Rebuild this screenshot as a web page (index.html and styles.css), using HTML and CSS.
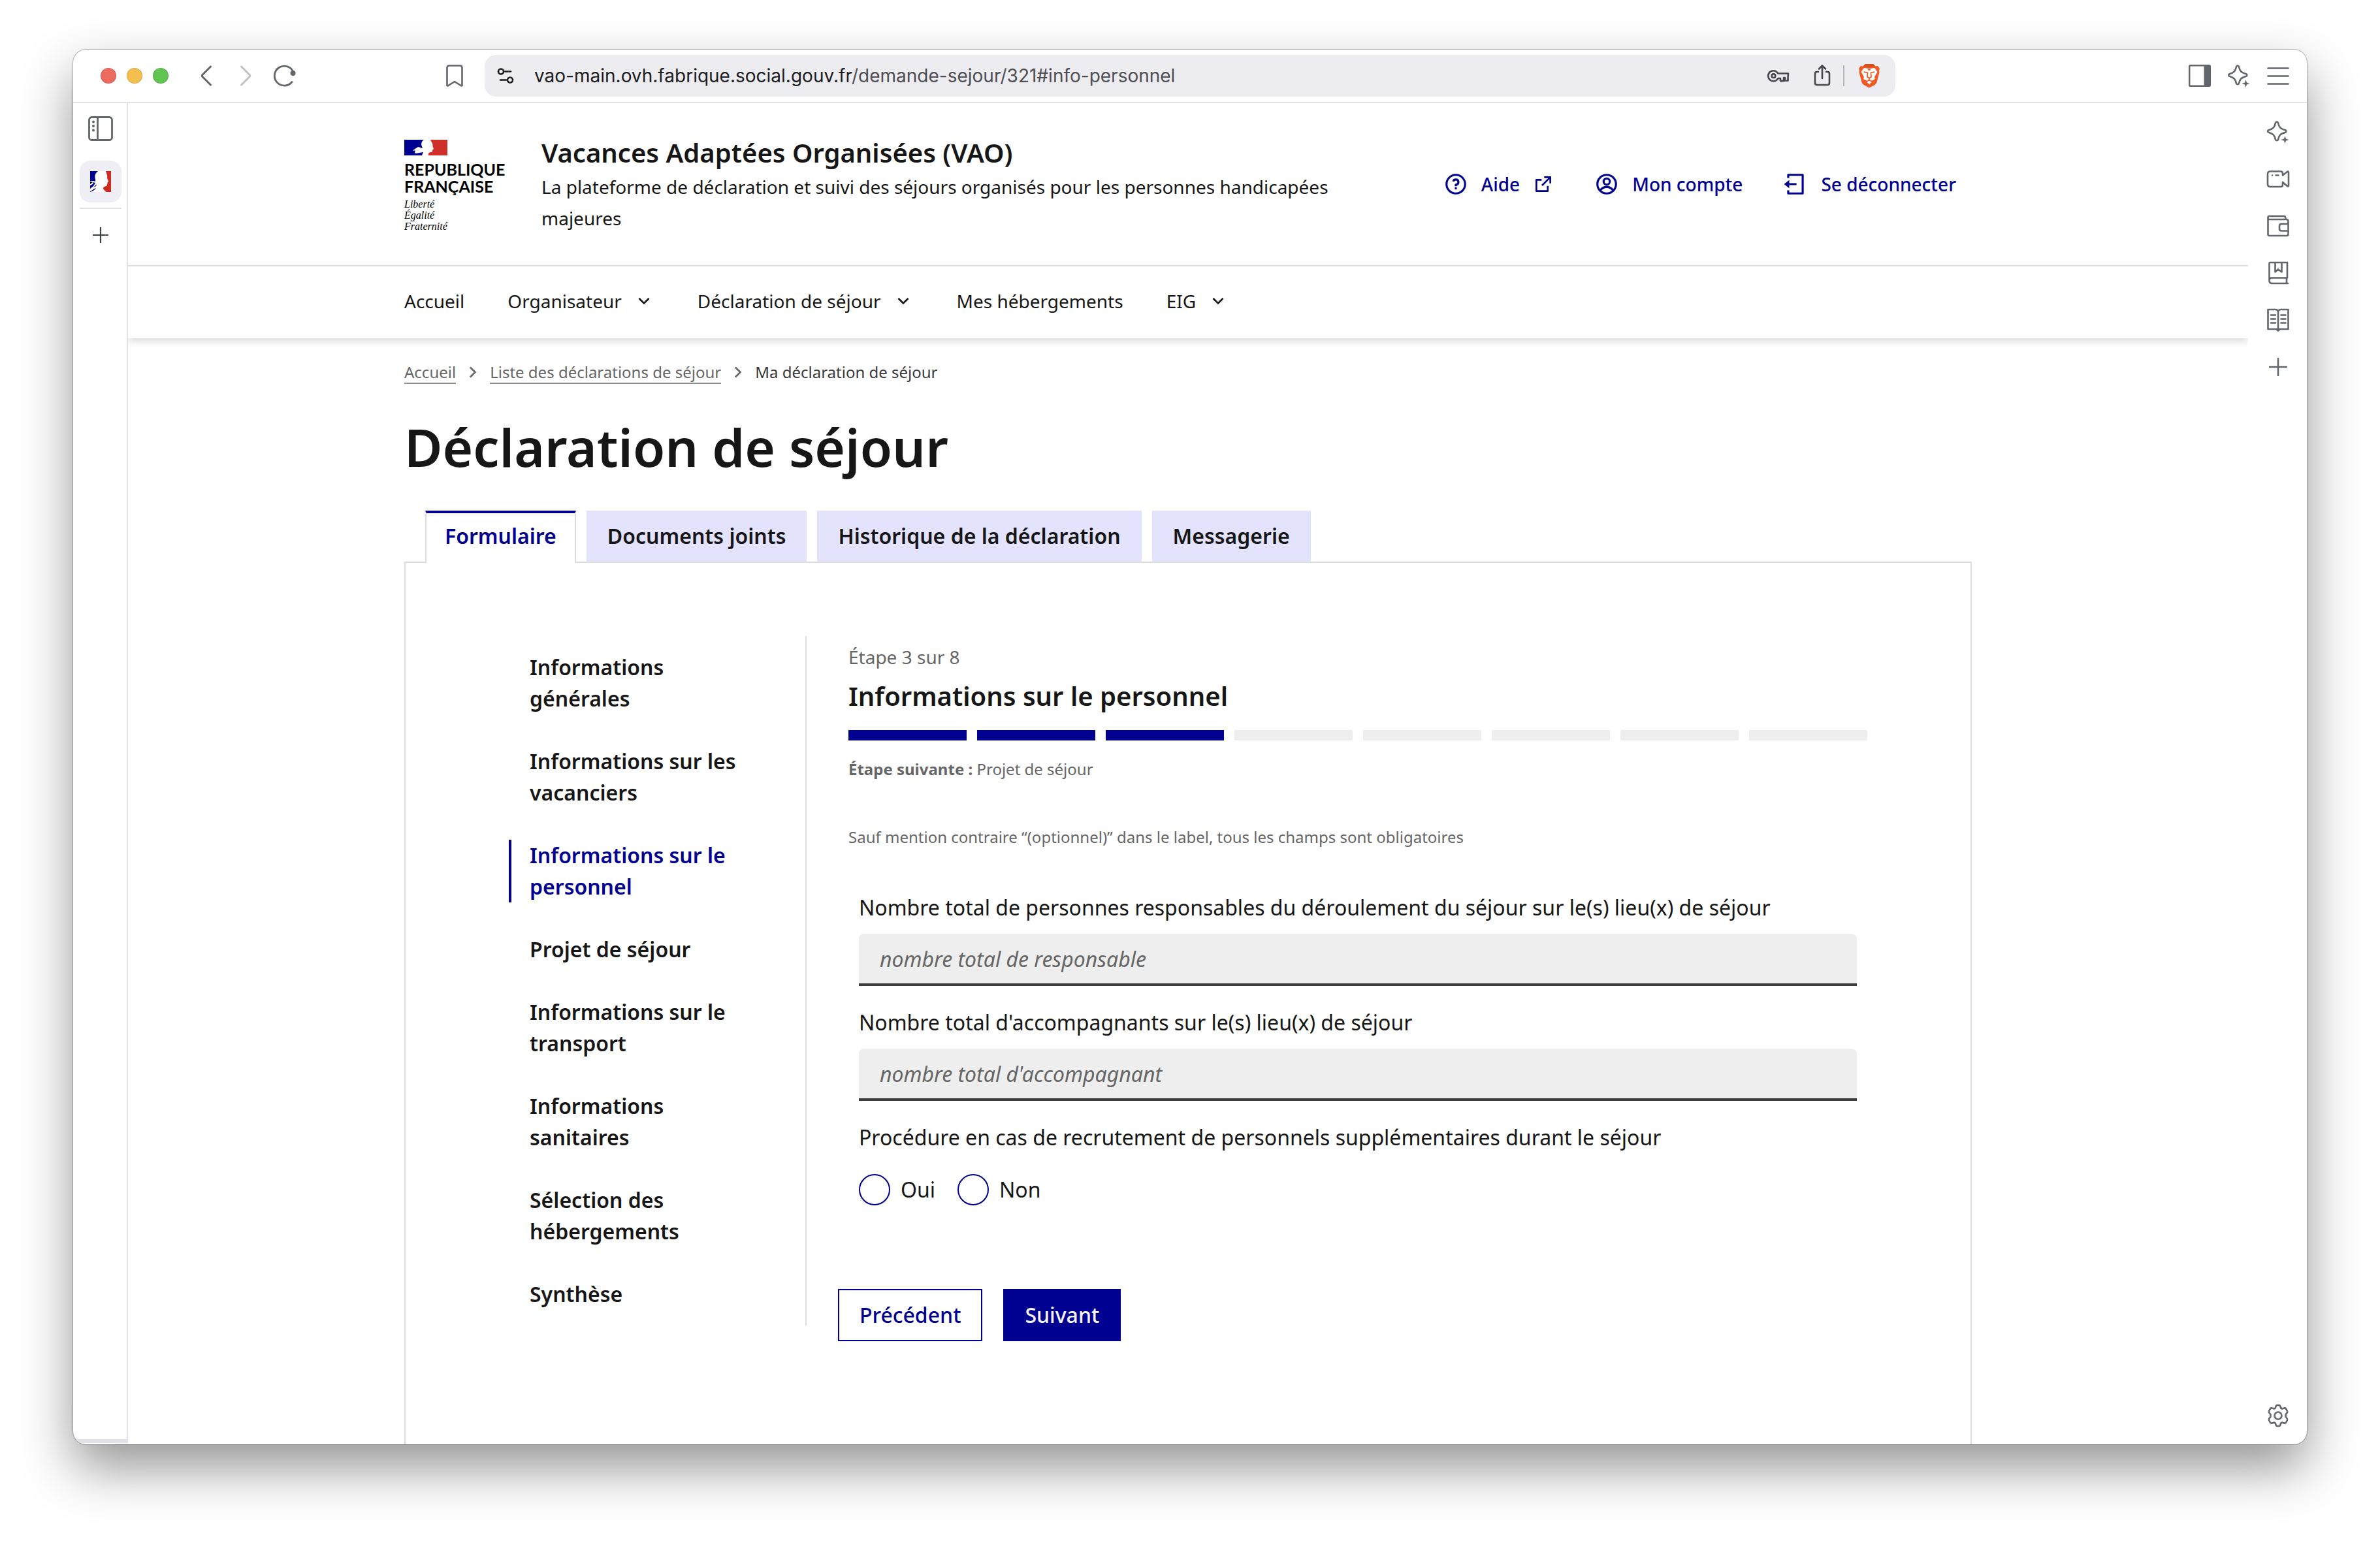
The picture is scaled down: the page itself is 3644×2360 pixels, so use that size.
FILE: index.html
```html
<!DOCTYPE html>
<html lang="fr">
<head>
<meta charset="utf-8">
<title>Déclaration de séjour - Vacances Adaptées Organisées</title>
<meta name="viewport" content="width=device-width, initial-scale=1">
<link rel="stylesheet" href="styles.css">
</head>
<body>
<svg class="defs" aria-hidden="true">
  <symbol id="sparkle" viewBox="0 0 36 36">
    <path d="M16 2.500c1 0 1.700.7 2 1.700 1.300 6.500 3.300 8.800 11 11 1.800.5 1.800 3 0 3.600-7.700 2.200-9.700 4.500-11 11-.4 1.900-3.600 1.900-4 0-1.300-6.500-3.300-8.800-10.500-11-1.800-.6-1.800-3.100 0-3.600C10.700 13 12.700 10.700 14 4.200c.3-1 1-1.700 2-1.700z" fill="none" stroke="currentColor" stroke-width="2.600" stroke-linejoin="round"/>
    <path d="M28.500 24l1.500 4.500 4.500 1.500-4.500 1.500-1.500 4.500-1.500-4.500-4.500-1.500 4.500-1.500z" fill="currentColor"/>
  </symbol>
  <symbol id="plus" viewBox="0 0 28 28">
    <path d="M14 1v26M1 14h26" stroke="currentColor" stroke-width="2.600" stroke-linecap="round"/>
  </symbol>
  <symbol id="chevron-down" viewBox="0 0 24 24">
    <path d="M12 13.200l4.950-4.950 1.410 1.410L12 16 5.640 9.660l1.410-1.410z" fill="currentColor"/>
  </symbol>
  <symbol id="chevron-right" viewBox="0 0 24 24">
    <path d="M13.170 12L8.220 7.050l1.410-1.410L16 12l-6.370 6.360-1.410-1.410z" fill="currentColor"/>
  </symbol>
</svg>

<div class="window">
  <header class="toolbar">
    <div class="toolbar-side">
      <div class="lights">
        <span class="light light-close"></span>
        <span class="light light-min"></span>
        <span class="light light-max"></span>
      </div>
      <button class="icon-btn" type="button" aria-label="Page précédente">
        <svg class="icon" viewBox="0 0 36 36"><path d="M24.500 4L12 16.500q-1.500 1.500 0 3L24.500 32" fill="none" stroke="currentColor" stroke-width="3" stroke-linecap="round"/></svg>
      </button>
      <button class="icon-btn icon-btn-off" type="button" aria-label="Page suivante">
        <svg class="icon" viewBox="0 0 36 36"><path d="M11.500 4L24 16.500q1.500 1.500 0 3L11.500 32" fill="none" stroke="currentColor" stroke-width="3" stroke-linecap="round"/></svg>
      </button>
      <button class="icon-btn" type="button" aria-label="Actualiser">
        <svg class="icon" viewBox="0 0 36 36"><path d="M29 27.500A15 15 0 1 1 31 12" fill="none" stroke="currentColor" stroke-width="2.800" stroke-linecap="round"/><circle cx="30.500" cy="14" r="4" fill="currentColor"/></svg>
      </button>
      <button class="icon-btn bookmark" type="button" aria-label="Ajouter aux favoris">
        <svg class="icon" viewBox="0 0 36 36"><path d="M6.500 33V6q0-3.500 3.500-3.500h16q3.500 0 3.500 3.500v27l-1 .5L18 27 7.500 33.500z" fill="none" stroke="currentColor" stroke-width="2.600" stroke-linejoin="round"/></svg>
      </button>
    </div>
    <div class="address">
      <svg class="icon-tune" viewBox="0 0 28 28" aria-hidden="true"><g fill="none" stroke="currentColor" stroke-width="2.600" stroke-linecap="round"><circle cx="7" cy="7.500" r="4"/><path d="M13 7.500h9"/><circle cx="21" cy="20.500" r="4"/><path d="M6 20.500h9"/></g></svg>
      <div class="url" role="textbox" aria-label="Adresse" contenteditable="true" spellcheck="false">vao-main.ovh.fabrique.social.gouv.fr<span class="url-path">/demande-sejour/321#info-personnel</span></div>
      <button class="icon-btn key" type="button" aria-label="Mots de passe">
        <svg class="icon" viewBox="0 0 36 36"><g fill="none" stroke="currentColor" stroke-width="2.600" stroke-linejoin="round"><path d="M18.300 14.500A8 8 0 1 0 18.300 22H22v4h5v-5h2v4.500h4.500V21l.5-6.500z"/><circle cx="11.500" cy="18.200" r="2.800"/></g></svg>
      </button>
      <button class="icon-btn" type="button" aria-label="Partager">
        <svg class="icon" viewBox="0 0 36 36"><g fill="none" stroke="currentColor" stroke-width="2.600" stroke-linecap="round" stroke-linejoin="round"><path d="M18 22V3M13 7.500L18 2.500l5 5M12 12H10q-3 0-3 3v14q0 3 3 3h16q3 0 3-3V15q0-3-3-3h-2"/></g></svg>
      </button>
      <span class="address-rule"></span>
      <button class="icon-btn" type="button" aria-label="Brave Shields">
        <svg class="icon" viewBox="0 0 36 36"><path d="M12 0h12l3.500 3.500 3.500-.5 3 4-1 3 .5 3-4 15q-1 2.500-3 4L18 36.500l-8.500-4.500q-2-1.500-3-4l-4-15L3 10 2 7l3-4 3.500.5z" fill="#f15a24"/><path d="M12 0h12l3.500 3.500L18 5.500 8.500 3.500z" fill="#d9501f"/><path d="M10 6l8 1.200L26 6l4.500 6-4.500 8 1 3-6 3 1 1.500-4 3.500-4-3.500 1-1.500-6-3 1-3-4.500-8z" fill="#fff"/><path d="M9.500 12l6 1.500-.5 6 3 2.500 3-2.500-.5-6 6-1.500M18 22v2.500l-5 3M18 24.500l5 3M16 8.500l2 .5 2-.5" fill="none" stroke="#f15a24" stroke-width="1.800"/></svg>
      </button>
    </div>
    <div class="toolbar-side toolbar-end">
      <button class="icon-btn" type="button" aria-label="Panneau latéral">
        <svg class="icon" viewBox="0 0 36 36"><rect x="2.200" y="2.200" width="31.600" height="31.600" rx="1.500" fill="none" stroke="currentColor" stroke-width="2.400"/><path d="M24.500 2h9v32h-9z" fill="currentColor"/></svg>
      </button>
      <button class="icon-btn" type="button" aria-label="Leo AI"><svg class="icon"><use href="#sparkle"/></svg></button>
      <button class="icon-btn" type="button" aria-label="Menu">
        <svg class="icon" viewBox="0 0 36 36"><path d="M2.500 6.500h31M2.500 18.500h31M2.500 30.500h31" stroke="currentColor" stroke-width="2.600" stroke-linecap="round"/></svg>
      </button>
    </div>
  </header>

  <div class="workspace">
    <aside class="tabs-rail">
      <button class="icon-btn" type="button" aria-label="Développer les onglets">
        <svg class="icon-lg" viewBox="0 0 38 38"><rect x="1.500" y="1.500" width="35" height="35" rx="4" fill="none" stroke="currentColor" stroke-width="2.800"/><path d="M14.500 2v34" stroke="currentColor" stroke-width="2.800"/><g fill="currentColor"><circle cx="8" cy="8.500" r="2"/><circle cx="8" cy="15" r="2"/><circle cx="8" cy="21.500" r="2"/></g></svg>
      </button>
      <button class="rail-tab" type="button" aria-label="Déclaration de séjour">
        <svg class="icon-fav" viewBox="0 0 32 32"><path fill="#fff" d="M0 0h32v32H0z"/><path d="M0 0h12C8 3 7 7 7.500 10c.2 2 1 4 .5 6l-3-1-5 1z" fill="#000091"/><path d="M0 17h4l-4 3zM0 22l4-2 1-3 3 1-3 5-5 4zM0 31c3-1 5-4 9-5-2 3-5 5-9 6zM10 20l-1 3-4 2z" fill="#000091"/><path d="M24 0h8v32h-8c0-2-4-3-4-6 0-3 6-2 6-5 0-2 1-2 .5-3.500.3-1 2-1 1.500-2L26 11c1-4-1-7-2-11z" fill="#ce2b23"/></svg>
      </button>
      <span class="rail-rule"></span>
      <button class="icon-btn rail-add" type="button" aria-label="Nouvel onglet"><svg class="icon-sm"><use href="#plus"/></svg></button>
    </aside>

    <div class="page">
      <header class="site-header">
        <div class="container header-body">
          <a class="logo" href="#" aria-label="République française">
            <svg class="flag" viewBox="0 0 66 24"><path d="M0 0h66v24H0z" fill="#fff"/><path d="M0 0h30c-3 2-4.500 5-3.500 9l1.500 4-3-1-4-1-6 4-2 2 4-1-1 4 2 1 5-1 6-1-2 5H0z" fill="#000091"/><path d="M14 16l5-3 3 1-4 2 4 1-5 3 3-3z" fill="#fff"/><path d="M40 0h26v24H37c-1-3 1-5 5-5 2-1 0-3 2-4 2-1 0-3-.5-5C44 5 41 3 40 0z" fill="#d0302a"/></svg>
            <span class="logo-name">REPUBLIQUE<br>FRANÇAISE</span>
            <span class="logo-motto">Liberté<br>Égalité<br>Fraternité</span>
          </a>
          <div class="service">
            <p class="service-title">Vacances Adaptées Organisées (VAO)</p>
            <p class="service-tagline">La plateforme de déclaration et suivi des séjours organisés pour les personnes handicapées majeures</p>
          </div>
          <div class="quick-links">
            <a class="quick-link" href="#">
              <svg class="icon-lg" viewBox="0 0 24 24" fill="currentColor"><path d="M12 22C6.477 22 2 17.523 2 12S6.477 2 12 2s10 4.477 10 10-4.477 10-10 10zm0-2a8 8 0 1 0 0-16 8 8 0 0 0 0 16zm-1-5h2v2h-2v-2zm2-1.645V14h-2v-1.500a1 1 0 0 1 1-1 1.500 1.500 0 1 0-1.471-1.794l-1.962-.393A3.501 3.501 0 1 1 13 13.355z"/></svg>
              Aide
              <svg class="icon-md" viewBox="0 0 24 24" fill="currentColor"><path d="M10 6v2H5v11h11v-5h2v6a1 1 0 0 1-1 1H4a1 1 0 0 1-1-1V7a1 1 0 0 1 1-1h6zm11-3v8h-2V6.413l-7.793 7.794-1.414-1.414L17.585 5H13V3h8z"/></svg>
            </a>
            <a class="quick-link" href="#">
              <svg class="icon-lg" viewBox="0 0 24 24" fill="none" stroke="currentColor" stroke-width="2"><circle cx="12" cy="12" r="9"/><circle cx="12" cy="9.500" r="3"/><path d="M5.800 18a7.500 7.500 0 0 1 12.400 0"/></svg>
              Mon compte
            </a>
            <a class="quick-link" href="#">
              <svg class="icon-lg" viewBox="0 0 24 24" fill="currentColor"><path d="M4 18h2v2h12V4H6v2H4V3a1 1 0 0 1 1-1h14a1 1 0 0 1 1 1v18a1 1 0 0 1-1 1H5a1 1 0 0 1-1-1v-3zm2-7h7v2H6v3l-5-4 5-4v3z"/></svg>
              Se déconnecter
            </a>
          </div>
        </div>
        <div class="nav-bar">
          <nav class="container nav" aria-label="Menu principal">
            <a class="nav-item" href="#">Accueil</a>
            <button class="nav-item" type="button">Organisateur <svg class="icon-md"><use href="#chevron-down"/></svg></button>
            <button class="nav-item" type="button">Déclaration de séjour <svg class="icon-md"><use href="#chevron-down"/></svg></button>
            <a class="nav-item" href="#">Mes hébergements</a>
            <button class="nav-item" type="button">EIG <svg class="icon-md"><use href="#chevron-down"/></svg></button>
          </nav>
        </div>
      </header>

      <main class="container main">
        <nav class="breadcrumb" aria-label="vous êtes ici :">
          <a class="crumb" href="#">Accueil</a>
          <svg class="icon-md"><use href="#chevron-right"/></svg>
          <a class="crumb" href="#">Liste des déclarations de séjour</a>
          <svg class="icon-md"><use href="#chevron-right"/></svg>
          <span class="crumb-current" aria-current="page">Ma déclaration de séjour</span>
        </nav>
        <h1 class="title">Déclaration de séjour</h1>

        <div class="tablist" role="tablist">
          <button class="tab tab-selected" type="button" role="tab" aria-selected="true">Formulaire</button>
          <button class="tab" type="button" role="tab">Documents joints</button>
          <button class="tab" type="button" role="tab">Historique de la déclaration</button>
          <button class="tab" type="button" role="tab">Messagerie</button>
        </div>

        <section class="panel" role="tabpanel">
          <nav class="steps" aria-label="Étapes">
            <a class="step" href="#">Informations générales</a>
            <a class="step" href="#">Informations sur les vacanciers</a>
            <a class="step step-active" href="#info-personnel" aria-current="step">Informations sur le personnel</a>
            <a class="step" href="#">Projet de séjour</a>
            <a class="step" href="#">Informations sur le transport</a>
            <a class="step" href="#">Informations sanitaires</a>
            <a class="step" href="#">Sélection des hébergements</a>
            <a class="step" href="#">Synthèse</a>
          </nav>

          <form class="form" id="info-personnel">
            <p class="stepper-state">Étape 3 sur 8</p>
            <h2 class="stepper-title">Informations sur le personnel</h2>
            <div class="stepper-bars">
              <span class="bar bar-done"></span><span class="bar bar-done"></span><span class="bar bar-done"></span><span class="bar"></span><span class="bar"></span><span class="bar"></span><span class="bar"></span><span class="bar"></span>
            </div>
            <p class="note stepper-next"><b>Étape suivante :</b> Projet de séjour</p>
            <p class="note required-note">Sauf mention contraire “(optionnel)” dans le label, tous les champs sont obligatoires</p>

            <div class="fields">
              <div class="field">
                <label for="responsables">Nombre total de personnes responsables du déroulement du séjour sur le(s) lieu(x) de séjour</label>
                <input class="input" id="responsables" type="text" placeholder="nombre total de responsable">
              </div>
              <div class="field">
                <label for="accompagnants">Nombre total d'accompagnants sur le(s) lieu(x) de séjour</label>
                <input class="input" id="accompagnants" type="text" placeholder="nombre total d'accompagnant">
              </div>
              <fieldset class="radios">
                <legend>Procédure en cas de recrutement de personnels supplémentaires durant le séjour</legend>
                <div class="radio-row">
                  <label class="radio-label"><input class="radio" type="radio" name="procedure"> Oui</label>
                  <label class="radio-label"><input class="radio" type="radio" name="procedure"> Non</label>
                </div>
              </fieldset>
            </div>

            <div class="actions">
              <button class="btn btn-secondary" type="button">Précédent</button>
              <button class="btn" type="submit">Suivant</button>
            </div>
          </form>
        </section>
      </main>
    </div>

    <aside class="side-rail">
      <button class="icon-btn" type="button" aria-label="Leo AI"><svg class="icon"><use href="#sparkle"/></svg></button>
      <button class="icon-btn" type="button" aria-label="Brave Talk">
        <svg class="icon" viewBox="0 0 36 36"><g fill="none" stroke="currentColor" stroke-width="2.600" stroke-linecap="round" stroke-linejoin="round"><path d="M25 12.500V9.500q0-3-3-3H6q-4 0-4 4V26q0 4 4 4h16q3 0 3-3v-4M25 12.500L32 7q2-1 2 1v20q0 2-2 1l-7-6"/><path d="M9 12.500h.1M14.500 12.500h4"/></g></svg>
      </button>
      <button class="icon-btn" type="button" aria-label="Portefeuille">
        <svg class="icon" viewBox="0 0 36 36"><g fill="none" stroke="currentColor" stroke-width="2.600" stroke-linejoin="round"><path d="M2.500 5q0-2 2-2H27q2.500 0 2.500 4.500M2.500 5v26q0 2 2 2h27q2 0 2-2V11q0-3-3-3h-28M33.500 15H23q-3 0-3 3v4.500q0 3 3 3h10.500"/></g></svg>
      </button>
      <button class="icon-btn" type="button" aria-label="Favoris">
        <svg class="icon" viewBox="0 0 36 36"><g fill="none" stroke="currentColor" stroke-width="2.600" stroke-linejoin="round" stroke-linecap="round"><path d="M4.500 29V3.500q0-1.500 1.500-1.500h26v23.500H8q-3.500 0-3.500 4T8 34h25M31 26v7.500M13.500 2.500v14L18 12.500l5.500 4v-14"/></g></svg>
      </button>
      <button class="icon-btn" type="button" aria-label="Liste de lecture">
        <svg class="icon" viewBox="0 0 36 36"><g fill="none" stroke="currentColor" stroke-width="2.600" stroke-linejoin="round" stroke-linecap="round"><path d="M18 5q-1-3-4-3H2.500v30h13L18 34.500l2.500-2.500h13V2H22q-3 0-4 3zM18 5v28M7 10.500h7M7 16.500h7M7 22.500h7M22.500 10.500h7M22.500 16.500h7M22.500 22.500h7"/></g></svg>
      </button>
      <button class="icon-btn" type="button" aria-label="Ajouter"><svg class="icon" viewBox="-4 -4 36 36"><use href="#plus" width="28" height="28"/></svg></button>
      <button class="icon-btn rail-settings" type="button" aria-label="Paramètres">
        <svg class="icon" viewBox="0 0 36 36"><g fill="none" stroke="currentColor" stroke-width="2.600" stroke-linejoin="round"><path d="M14.500 4q.5-2 2-2h3q1.500 0 2 2l.8 2.500 2 1L27 6.500q2-.5 3 .8L32 11q.8 1.500-.6 3l-1.800 2v4l1.800 2q1.400 1.500.6 3l-2 3.700q-1 1.300-3 .8l-2.700-1-2 1-.8 2.500q-.5 2-2 2h-3q-1.500 0-2-2l-.8-2.500-2-1-2.700 1q-2 .5-3-.8L4 25q-.8-1.500.6-3l1.800-2v-4l-1.800-2Q3.200 12.500 4 11l2-3.700q1-1.300 3-.8l2.700 1 2-1z"/><circle cx="18" cy="18" r="5.500"/></g></svg>
      </button>
    </aside>
  </div>
</div>
</body>
</html>
```

FILE: styles.css
```css
:root {
  --blue: #000091;
  --ink: #161616;
  --grey: #666;
  --line: #ddd;
  --field: #eee;
  --chrome-line: #e2e1e8;
  --chrome-ink: #62656b;
}

* { box-sizing: border-box; }

body {
  margin: 0;
  height: 100vh;
  padding: 76px 112px 148px;
  display: flex;
  overflow: hidden;
  background: #fff;
  color: var(--ink);
  font-family: "Noto Sans", "Open Sans", sans-serif;
  font-size: 32px;
  line-height: 48px;
}

p, h1, h2 { margin: 0; }
a { color: inherit; text-decoration: none; }
button {
  margin: 0;
  padding: 0;
  border: 0;
  background: none;
  color: inherit;
  font: inherit;
  cursor: pointer;
}
svg { display: block; flex: none; }

.defs { display: none; }
.icon { width: 36px; height: 36px; }
.icon-sm { width: 24px; height: 24px; }
.icon-md { width: 32px; height: 32px; }
.icon-lg { width: 38px; height: 38px; }
.icon-fav { width: 32px; height: 32px; }
.icon-tune { width: 28px; height: 28px; }

/* Browser window */
.window {
  flex: 1;
  min-width: 0;
  display: flex;
  flex-direction: column;
  overflow: hidden;
  border-radius: 20px;
  background: #fff;
  box-shadow: 0 0 0 1px rgba(0, 0, 0, .28), 0 36px 80px rgba(0, 0, 0, .42);
}

.toolbar {
  flex: none;
  display: grid;
  grid-template-columns: 1fr minmax(0, 2160px) 1fr;
  align-items: center;
  height: 82px;
  border-bottom: 2px solid var(--chrome-line);
  color: var(--chrome-ink);
}
.toolbar-side {
  display: flex;
  align-items: center;
  gap: 24px;
  padding: 0 28px 0 42px;
}
.toolbar-end { justify-content: flex-end; padding: 0 26px; }
.lights { display: flex; gap: 16px; margin-right: 16px; }
.light { width: 24px; height: 24px; border-radius: 50%; border: 1px solid rgba(0, 0, 0, .12); }
.light-close { background: #ed6a5e; }
.light-min { background: #f5bf4f; }
.light-max { background: #61c554; }
.icon-btn-off { opacity: .4; }
.bookmark { margin-left: auto; }

.address {
  display: flex;
  align-items: center;
  height: 64px;
  padding: 0 22px 0 18px;
  border-radius: 18px;
  background: #edecf1;
  color: #46474d;
}
.icon-tune { color: #1c1c20; }
.url {
  flex: 1;
  margin-left: 30px;
  color: #1c1c20;
  font-family: Inter, sans-serif;
  font-size: 28px;
  white-space: nowrap;
}
.url-path { color: #4d4d52; }
.key { margin-right: 32px; }
.address-rule { width: 2px; height: 32px; margin: 0 20px 0 14px; background: #b9b8be; }

.workspace { flex: 1; min-height: 0; display: flex; }

.tabs-rail {
  flex: none;
  display: flex;
  flex-direction: column;
  align-items: center;
  width: 84px;
  margin-bottom: 2px;
  padding: 20px 0 0 2px;
  border-right: 2px solid var(--chrome-line);
  border-bottom: 6px solid var(--chrome-line);
  color: var(--chrome-ink);
}
.rail-tab {
  display: grid;
  place-items: center;
  width: 64px;
  height: 64px;
  margin-top: 30px;
  border-radius: 16px;
  background: #efeef4;
}
.rail-rule { width: 64px; height: 2px; margin: 8px 0 28px; background: var(--chrome-line); }
.rail-add { color: #3b3e45; }

.side-rail {
  flex: none;
  display: flex;
  flex-direction: column;
  align-items: center;
  gap: 36px;
  width: 90px;
  padding: 26px 0 26px 2px;
  color: var(--chrome-ink);
}
.rail-settings { margin-top: auto; }

/* Site */
.page {
  flex: 1;
  min-width: 0;
  display: flex;
  flex-direction: column;
  overflow: hidden;
}
.container { width: 100%; max-width: 2400px; margin: 0 auto; }

.site-header { flex: none; box-shadow: 0 4px 12px rgba(0, 0, 0, .16); }
.header-body {
  display: flex;
  align-items: center;
  min-height: 248px;
}
.logo {
  flex: none;
  display: flex;
  flex-direction: column;
  width: 210px;
  padding-top: 4px;
  color: #000;
}
.flag { width: 66px; height: 24px; }
.logo-name { margin-top: 8px; font-family: Lato, sans-serif; font-size: 25px; line-height: 26px; font-weight: 700; }
.logo-motto {
  margin-top: 6px;
  font-family: "Liberation Serif", serif;
  font-size: 16px;
  line-height: 17px;
  font-style: italic;
}
.service { flex: 1; padding-right: 64px; }
.service-title { font-size: 40px; line-height: 56px; font-weight: 600; }
.service-tagline { font-size: 28px; }
.quick-links { display: flex; gap: 62px; padding-right: 24px; }
.quick-link {
  display: flex;
  align-items: center;
  gap: 20px;
  color: var(--blue);
  font-size: 28px;
  font-weight: 500;
  white-space: nowrap;
}

.nav-bar { border-top: 2px solid var(--line); }
.nav { display: flex; align-items: center; gap: 66px; height: 110px; padding-bottom: 4px; }
.nav-item { display: flex; align-items: center; gap: 18px; font-size: 28px; }

.main {
  flex: 1;
  display: flex;
  flex-direction: column;
  padding-top: 36px;
}
.breadcrumb {
  display: flex;
  align-items: flex-start;
  gap: 10px;
  color: var(--grey);
  font-size: 24px;
  line-height: 32px;
}
.crumb { border-bottom: 2px solid #8c8c8c; }
.crumb-current { color: #3a3a3a; }
.title { margin: 48px 0 50px; font-size: 80px; line-height: 96px; font-weight: 600; }

.tablist { display: flex; gap: 16px; padding-left: 32px; }
.tab {
  height: 78px;
  padding: 0 32px;
  background: #e3e3fd;
  font-weight: 600;
}
.tab-selected {
  position: relative;
  height: 80px;
  margin-bottom: -2px;
  padding: 0 28px 6px;
  border: solid var(--line);
  border-width: 4px 2px 0;
  border-top-color: var(--blue);
  background: #fff;
  color: var(--blue);
}

.panel {
  flex: 1;
  display: grid;
  grid-template-columns: 456px minmax(0, 1fr);
  gap: 64px;
  align-items: start;
  padding: 112px 158px 0;
  border: solid var(--line);
  border-width: 2px 2px 0;
}

.steps {
  display: flex;
  flex-direction: column;
  gap: 48px;
  padding: 24px 96px 24px 0;
  border-right: 2px solid var(--line);
  font-weight: 600;
}
.step { padding-left: 28px; border-left: 4px solid transparent; }
.step-active { border-left-color: var(--blue); color: var(--blue); }

.form { padding-top: 8px; }
.stepper-state { color: var(--grey); font-size: 28px; }
.stepper-title { margin: 8px 0 24px; font-size: 40px; line-height: 56px; font-weight: 600; }
.stepper-bars { display: flex; gap: 16px; }
.bar { flex: 1; height: 16px; background: var(--field); }
.bar-done { background: var(--blue); }
.note { color: var(--grey); font-size: 24px; line-height: 40px; }
.stepper-next { margin-top: 24px; }
.required-note { margin: 64px 0; }

.fields { display: flex; flex-direction: column; gap: 32px; padding: 0 16px; }
.field { display: flex; flex-direction: column; gap: 16px; }
.input {
  width: 100%;
  height: 80px;
  padding: 0 32px;
  border: 0;
  border-bottom: 4px solid #3a3a3a;
  border-radius: 8px 8px 0 0;
  background: var(--field);
  color: var(--ink);
  font: inherit;
}
.input::placeholder { color: var(--grey); font-style: italic; opacity: 1; }
.radios { margin: 0; padding: 0; border: 0; }
.radios legend { padding: 0; }
.radio-row { display: flex; gap: 34px; margin-top: 32px; }
.radio-label { display: flex; align-items: center; gap: 16px; }
.radio {
  appearance: none;
  width: 48px;
  height: 48px;
  margin: 0;
  border: 2px solid var(--blue);
  border-radius: 50%;
}
.radio:checked { background: radial-gradient(var(--blue) 45%, transparent 50%); }

.actions { display: flex; gap: 32px; margin: 128px 0 0 -16px; }
.btn {
  height: 80px;
  padding: 0 31px;
  border: 2px solid var(--blue);
  background: var(--blue);
  color: #f5f5fe;
  font-weight: 500;
}
.btn-secondary { background: #fff; color: var(--blue); }
```
